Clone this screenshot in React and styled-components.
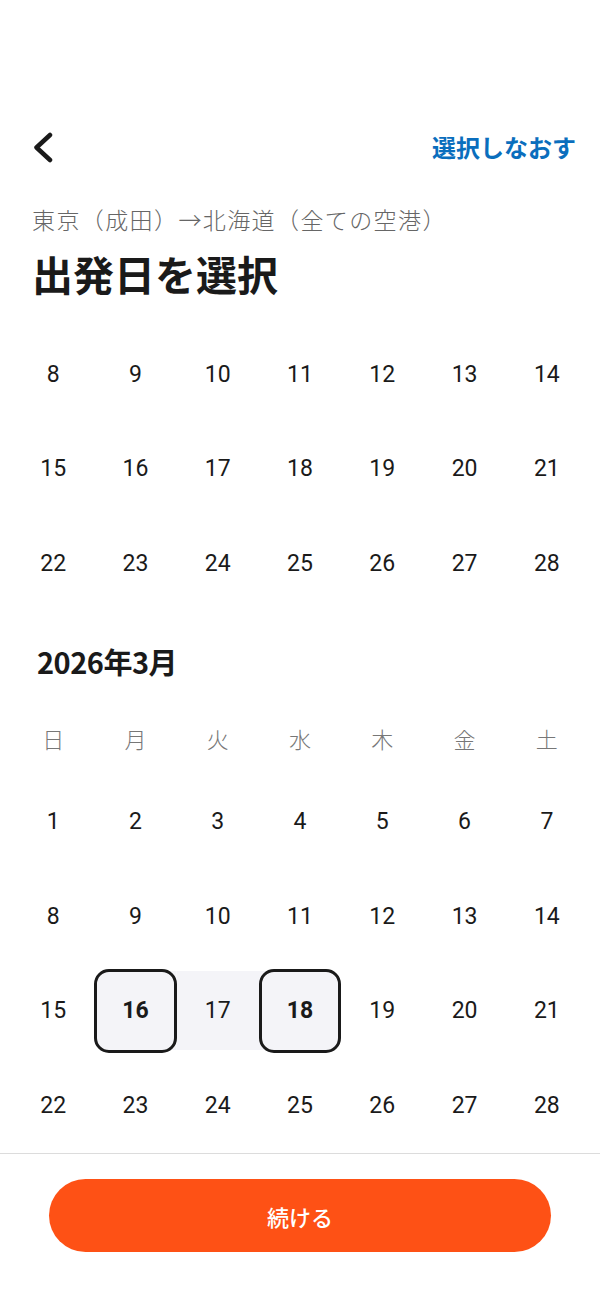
import React from 'react'
import styled, { createGlobalStyle } from 'styled-components'

const GlobalStyle = createGlobalStyle`
  html, body {
    margin: 0;
    padding: 0;
    background: #ffffff;
  }
  body {
    font-family: Roboto, "Noto Sans CJK JP", "Noto Sans", sans-serif;
    color: #1a1a1a;
  }
  * {
    box-sizing: border-box;
  }
`

const Page = styled.div`
  width: 600px;
  height: 1301px;
  display: flex;
  flex-direction: column;
  background: #ffffff;
  overflow: hidden;
`

const Header = styled.div`
  height: 327px;
  flex-shrink: 0;
  padding: 110px 24px 0 32px;
`

const TopBar = styled.div`
  height: 74px;
  display: flex;
  align-items: center;
  justify-content: space-between;
`

const BackButton = styled.button`
  border: none;
  background: none;
  padding: 0;
  margin-left: -1px;
  width: 24px;
  height: 32px;
  display: flex;
  cursor: pointer;
`

const ResetLink = styled.a`
  font-family: "Noto Sans CJK JP", sans-serif;
  font-size: 24px;
  font-weight: 700;
  color: #0a6ebd;
  text-decoration: none;
  line-height: 32px;
`

const Route = styled.div`
  margin-top: 19px;
  font-family: "Noto Sans CJK JP", sans-serif;
  font-size: 23px;
  font-weight: 300;
  letter-spacing: 1.4px;
  line-height: 32px;
  color: #666666;
  white-space: nowrap;
`

const Title = styled.h1`
  margin: 12px 0 0;
  font-family: "Noto Sans CJK JP", sans-serif;
  font-size: 41px;
  font-weight: 700;
  line-height: 52px;
  color: #1a1a1a;
`

const CalendarScroll = styled.div`
  flex: 1;
  overflow: hidden;
  padding: 0 12px;
`

const Month = styled.section`
  padding-top: ${({ $first }) => ($first ? '0' : '32px')};
`

const MonthTitle = styled.h2`
  margin: 0 0 22px;
  padding-left: 25px;
  font-family: "Noto Sans CJK JP", sans-serif;
  font-size: 29px;
  font-weight: 700;
  line-height: 36px;
  letter-spacing: -0.5px;
  color: #1a1a1a;
`

const Grid = styled.div`
  display: grid;
  grid-template-columns: repeat(7, 1fr);
  grid-auto-rows: ${({ $rowHeight }) => $rowHeight};
`

const Weekday = styled.div`
  display: flex;
  align-items: center;
  justify-content: center;
  font-family: "Noto Sans CJK JP", sans-serif;
  font-size: 22px;
  font-weight: 300;
  color: #777777;
`

const band = '#f4f4f8'

const bandFor = (range) => {
  if (range === 'start') return `linear-gradient(to right, transparent 50%, ${band} 50%)`
  if (range === 'end') return `linear-gradient(to right, ${band} 50%, transparent 50%)`
  if (range === 'mid') return `linear-gradient(${band}, ${band})`
  return 'none'
}

const DayCell = styled.div`
  display: flex;
  align-items: center;
  justify-content: center;
  background-image: ${({ $range }) => bandFor($range)};
  background-repeat: no-repeat;
  background-position: center;
  background-size: 100% 79px;
`

const DayBox = styled.div`
  width: ${({ $selected }) => ($selected ? 'calc(100% + 2px)' : '100%')};
  height: 84px;
  display: flex;
  align-items: center;
  justify-content: center;
  border-radius: 15px;
  border: ${({ $selected }) => ($selected ? '3px solid #1a1a1a' : 'none')};
  background: ${({ $selected }) => ($selected ? band : 'transparent')};
  font-family: Roboto, sans-serif;
  font-size: 23px;
  font-weight: ${({ $selected }) => ($selected ? 700 : 400)};
  color: #1a1a1a;
`

const Footer = styled.div`
  flex-shrink: 0;
  height: 148px;
  border-top: 1px solid #dcdcdc;
  padding: 25px 49px 0;
`

const ContinueButton = styled.button`
  width: 100%;
  height: 73px;
  border: none;
  border-radius: 37px;
  background: #fe5115;
  color: #ffffff;
  font-family: "Noto Sans CJK JP", sans-serif;
  font-size: 22px;
  font-weight: 500;
  cursor: pointer;
`

const weekdays = ['日', '月', '火', '水', '木', '金', '土']

const febRows = [
  [8, 9, 10, 11, 12, 13, 14],
  [15, 16, 17, 18, 19, 20, 21],
  [22, 23, 24, 25, 26, 27, 28],
]

const marchRows = [
  [1, 2, 3, 4, 5, 6, 7],
  [8, 9, 10, 11, 12, 13, 14],
  [15, 16, 17, 18, 19, 20, 21],
  [22, 23, 24, 25, 26, 27, 28],
]

const rangeStart = 16
const rangeEnd = 18

function Day({ day, inMarch }) {
  let range = null
  if (inMarch && rangeStart !== rangeEnd) {
    if (day === rangeStart) range = 'start'
    else if (day === rangeEnd) range = 'end'
    else if (day > rangeStart && day < rangeEnd) range = 'mid'
  }
  const selected = inMarch && (day === rangeStart || day === rangeEnd)
  return (
    <DayCell $range={range}>
      <DayBox $selected={selected}>{day}</DayBox>
    </DayCell>
  )
}

function BackIcon() {
  return (
    <svg width="24" height="32" viewBox="0 0 24 32" fill="none">
      <path d="M19 4 L5.5 16.5 L19 29" stroke="#1a1a1a" strokeWidth="4.5" strokeLinecap="round" strokeLinejoin="round" />
    </svg>
  )
}

export default function App() {
  return (
    <>
      <GlobalStyle />
      <Page>
        <Header>
          <TopBar>
            <BackButton aria-label="戻る">
              <BackIcon />
            </BackButton>
            <ResetLink href="#">選択しなおす</ResetLink>
          </TopBar>
          <Route>東京（成田）→北海道（全ての空港）</Route>
          <Title>出発日を選択</Title>
        </Header>

        <CalendarScroll>
          <Month $first>
            <Grid $rowHeight="94.5px">
              {febRows.flat().map((d) => (
                <Day key={`f${d}`} day={d} />
              ))}
            </Grid>
          </Month>

          <Month>
            <MonthTitle>2026年3月</MonthTitle>
            <Grid $rowHeight="74px">
              {weekdays.map((w) => (
                <Weekday key={w}>{w}</Weekday>
              ))}
            </Grid>
            <Grid $rowHeight="94.5px">
              {marchRows.flat().map((d) => (
                <Day key={`m${d}`} day={d} inMarch />
              ))}
            </Grid>
          </Month>
        </CalendarScroll>

        <Footer>
          <ContinueButton>続ける</ContinueButton>
        </Footer>
      </Page>
    </>
  )
}
